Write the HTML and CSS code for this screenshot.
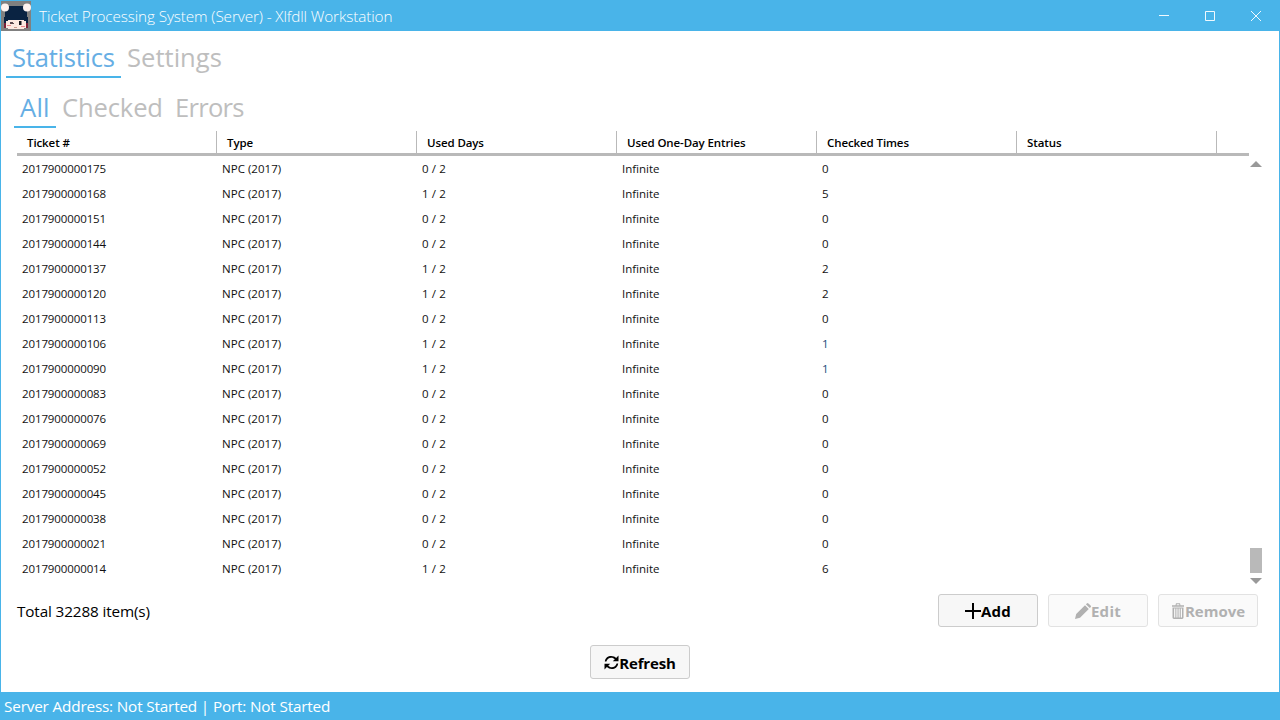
FILE: index.html
```html
<!DOCTYPE html>
<html lang="en">
<head>
<meta charset="utf-8">
<title>Ticket Processing System (Server) - Xlfdll Workstation</title>
<link rel="stylesheet" href="styles.css">
</head>
<body>
<div class="window">
  <header class="titlebar">
    <svg class="app-icon" width="30" height="30" viewBox="0 0 30 30">
      <rect width="30" height="30" fill="#808080"/>
      <path d="M6 5h18v4h2v9H4V9h2z" fill="#0a2342"/>
      <path d="M3 16h3v7H3zM24 16h3v7h-3z" fill="#0a2342"/>
      <path d="M3 22h2v5H3zM25 22h2v5h-2z" fill="#7a2036"/>
      <path d="M5 19h20v8h-2v1H7v-1H5z" fill="#fbe9e1"/>
      <path d="M5 18h20v1H5zM5 19h2v1H5zM23 19h2v1h-2z" fill="#0a2342"/>
      <path d="M9 21h3v1h1v1H9z" fill="#5a4a50"/>
      <path d="M18 20h2.500v4H18z" fill="#15161c"/>
      <path d="M6 24h4v1H6zM20 25h4v1h-4z" fill="#f08a90"/>
      <path d="M13 26h3v1h-3z" fill="#c99a8c"/>
      <circle cx="4" cy="6.500" r="4" fill="#fff3f0"/>
      <circle cx="26" cy="6.500" r="4" fill="#fff3f0"/>
    </svg>
    <span class="title">Ticket Processing System (Server) - Xlfdll Workstation</span>
    <div class="controls">
      <svg width="46" height="31" viewBox="0 0 46 31"><path d="M18 15.500h10"/></svg>
      <svg width="46" height="31" viewBox="0 0 46 31"><path d="M18.500 11.500h9v9h-9z"/></svg>
      <svg width="46" height="31" viewBox="0 0 46 31"><path d="M18 11l10 10M28 11L18 21"/></svg>
    </div>
  </header>

  <main class="content">
    <nav class="tabs tabs-main"><span class="tab active t-stat">Statistics</span><span class="tab t-set">Settings</span></nav>
    <nav class="tabs tabs-sub"><span class="tab active t-all">All</span><span class="tab t-chk">Checked</span><span class="tab t-err">Errors</span></nav>

    <section class="grid">
      <div class="table">
        <div class="head"><span>Ticket #</span><span>Type</span><span>Used Days</span><span>Used One-Day Entries</span><span>Checked Times</span><span>Status</span></div>
        <div class="rows">
          <div class="row"><span>2017900000175</span><span>NPC (2017)</span><span>0 / 2</span><span>Infinite</span><span>0</span></div>
          <div class="row"><span>2017900000168</span><span>NPC (2017)</span><span>1 / 2</span><span>Infinite</span><span>5</span></div>
          <div class="row"><span>2017900000151</span><span>NPC (2017)</span><span>0 / 2</span><span>Infinite</span><span>0</span></div>
          <div class="row"><span>2017900000144</span><span>NPC (2017)</span><span>0 / 2</span><span>Infinite</span><span>0</span></div>
          <div class="row"><span>2017900000137</span><span>NPC (2017)</span><span>1 / 2</span><span>Infinite</span><span>2</span></div>
          <div class="row"><span>2017900000120</span><span>NPC (2017)</span><span>1 / 2</span><span>Infinite</span><span>2</span></div>
          <div class="row"><span>2017900000113</span><span>NPC (2017)</span><span>0 / 2</span><span>Infinite</span><span>0</span></div>
          <div class="row"><span>2017900000106</span><span>NPC (2017)</span><span>1 / 2</span><span>Infinite</span><span class="one">1</span></div>
          <div class="row"><span>2017900000090</span><span>NPC (2017)</span><span>1 / 2</span><span>Infinite</span><span class="one">1</span></div>
          <div class="row"><span>2017900000083</span><span>NPC (2017)</span><span>0 / 2</span><span>Infinite</span><span>0</span></div>
          <div class="row"><span>2017900000076</span><span>NPC (2017)</span><span>0 / 2</span><span>Infinite</span><span>0</span></div>
          <div class="row"><span>2017900000069</span><span>NPC (2017)</span><span>0 / 2</span><span>Infinite</span><span>0</span></div>
          <div class="row"><span>2017900000052</span><span>NPC (2017)</span><span>0 / 2</span><span>Infinite</span><span>0</span></div>
          <div class="row"><span>2017900000045</span><span>NPC (2017)</span><span>0 / 2</span><span>Infinite</span><span>0</span></div>
          <div class="row"><span>2017900000038</span><span>NPC (2017)</span><span>0 / 2</span><span>Infinite</span><span>0</span></div>
          <div class="row"><span>2017900000021</span><span>NPC (2017)</span><span>0 / 2</span><span>Infinite</span><span>0</span></div>
          <div class="row"><span>2017900000014</span><span>NPC (2017)</span><span>1 / 2</span><span>Infinite</span><span>6</span></div>
        </div>
      </div>
      <div class="scrollbar">
        <svg width="12" height="6" viewBox="0 0 12 6"><path d="M6 0l6 6H0z"/></svg>
        <div class="thumb"></div>
        <svg width="12" height="6" viewBox="0 0 12 6"><path d="M0 0h12L6 6z"/></svg>
      </div>
    </section>

    <section class="actions">
      <span class="total">Total 32288 item(s)</span>
      <div class="buttons">
        <button class="btn"><svg width="16" height="16" viewBox="0 0 16 16"><path d="M7 0h2v7h7v2H9v7H7V9H0V7h7z"/></svg><span class="b-add">Add</span></button>
        <button class="btn" disabled><svg width="16" height="16" viewBox="0 0 16 16"><path d="M0 16l1.200-5L10 2.200 13.800 6 5 14.800zM10.900 1.300l.9-.9q.8-.8 1.600 0l2.200 2.200q.8.8 0 1.600l-.9.900z"/></svg><span class="b-edit">Edit</span></button>
        <button class="btn" disabled><svg width="14" height="16" viewBox="0 0 14 16"><path fill-rule="evenodd" d="M1 2.200h3.500L5 .3h4l.5 1.900H13v1.600H1zM5.800 1.200l-.2 1h2.800l-.2-1zM1.500 4.600h11v10q0 1.400-1.400 1.400H2.900q-1.400 0-1.400-1.400zM3.100 5.600v9h1.200v-9zM5.400 5.600v9h1.100v-9zM7.600 5.600v9h1.100v-9zM9.800 5.600v9H11v-9z"/></svg><span class="b-rem">Remove</span></button>
      </div>
    </section>

    <section class="refresh">
      <button class="btn"><svg width="15" height="15" viewBox="0 0 15 15"><path d="M.8 6.500C1.300 2.800 4 1 7.200 1c2 0 3.600.7 4.900 1.900L14.500.5v5.700H8.800l2-2C9.800 3.300 8.600 2.700 7.300 2.700c-2.400 0-4.300 1.500-4.900 3.800zM14.200 8.500C13.700 12.200 11 14 7.800 14c-2 0-3.600-.7-4.900-1.900L.5 14.500V8.800h5.700l-2 2c1 .9 2.200 1.500 3.500 1.500 2.400 0 4.300-1.500 4.900-3.800z"/></svg><span class="b-ref">Refresh</span></button>
    </section>
  </main>

  <footer class="status"><span>Server Address: Not Started | Port: Not Started</span></footer>
</div>
</body>
</html>
```
FILE: styles.css
```css
* { box-sizing: border-box; }
body {
  margin: 0;
  font-family: "Open Sans", "Noto Sans", sans-serif;
  color: #000;
  background: #fff;
}
.window {
  width: 1280px;
  height: 720px;
  display: flex;
  flex-direction: column;
  overflow: hidden;
  white-space: nowrap;
}
.titlebar {
  height: 31px;
  flex: none;
  display: flex;
  padding: 1px 0 0 1px;
  background: #49b4e9;
}
.app-icon { display: block; flex: none; }
.title {
  margin-left: 8px;
  line-height: 30px;
  font-size: 15.300px;
  font-weight: 300;
  letter-spacing: -0.12px;
  color: #fff;
}
.controls { display: flex; margin: -1px 1px 0 auto; }
.controls path { fill: none; stroke: #f0f9fe; stroke-width: 1; }
.content {
  flex: 1;
  border: solid #49b4e9;
  border-width: 0 1px;
}
.tabs { display: flex; font-size: 25.600px; color: #bebebe; }
.tabs-main { height: 47px; padding-left: 5px; }
.tabs-sub { height: 50px; padding-left: 13px; }
.tab { padding: 0 6px; border-bottom: 2px solid transparent; line-height: 53px; }
.tabs-sub .tab { line-height: 59px; }
.tab.active { color: #66aee4; border-color: #49b4e9; }
.t-stat { width: 115px; letter-spacing: -0.25px; }
.t-set { width: 107px; }
.t-all { width: 42px; letter-spacing: 0.2px; }
.t-chk { width: 113px; letter-spacing: -0.15px; }
.t-err { letter-spacing: -0.75px; }
.grid { display: flex; height: 460px; padding: 3px 16px 0; }
.table { width: 1232px; }
.head {
  display: flex;
  height: 25px;
  border-bottom: 3px solid #b9b9b9;
  font-size: 11.500px;
  font-weight: 600;
  letter-spacing: -0.1px;
}
.head span {
  width: 200px;
  padding-left: 10px;
  line-height: 23px;
  border-right: 1px solid #b9b9b9;
}
.rows { font-size: 11.500px; color: #111; }
.row { display: flex; height: 25px; line-height: 26px; }
.row span { width: 200px; padding-left: 5px; letter-spacing: -0.11px; }
.row span:nth-child(2) { letter-spacing: 0.03px; }
.row span:nth-child(3) { letter-spacing: 0.15px; }
.row span:nth-child(4) { letter-spacing: 0; }
.row .one { color: #1b4a7c; }
.scrollbar {
  width: 14px;
  display: flex;
  flex-direction: column;
  align-items: center;
  padding-top: 30px;
}
.scrollbar svg { display: block; flex: none; fill: #999; }
.thumb { width: 12px; height: 25px; flex: none; margin: 381px 0 5px; background: #b9b9b9; }
.actions {
  display: flex;
  justify-content: space-between;
  padding: 6px 21px 0 16px;
  height: 39px;
}
.total { font-size: 15.300px; line-height: 34px; letter-spacing: -0.14px; }
.buttons { display: flex; gap: 10px; }
.btn {
  width: 100px;
  height: 33px;
  padding: 0;
  display: flex;
  align-items: center;
  justify-content: center;
  border: 1px solid #ccc;
  border-radius: 3px;
  background: #f7f7f7;
  color: #000;
  font: 700 15px "Open Sans", "Noto Sans", sans-serif;
}
.btn svg { flex: none; fill: currentColor; }
.b-add { letter-spacing: 0.3px; }
.b-edit { letter-spacing: 0.3px; }
.b-ref { letter-spacing: -0.15px; padding-top: 1px; }
.btn:disabled { color: #b1b1b1; background: #fafafa; border-color: #e2e2e2; }
.refresh { display: flex; justify-content: center; padding-top: 18px; }
.refresh .btn { height: 34px; }
.status {
  flex: none;
  height: 28px;
  padding-left: 4px;
  line-height: 29px;
  font-size: 15.300px;
  letter-spacing: -0.17px;
  color: #fff;
  background: #49b4e9;
}
```
